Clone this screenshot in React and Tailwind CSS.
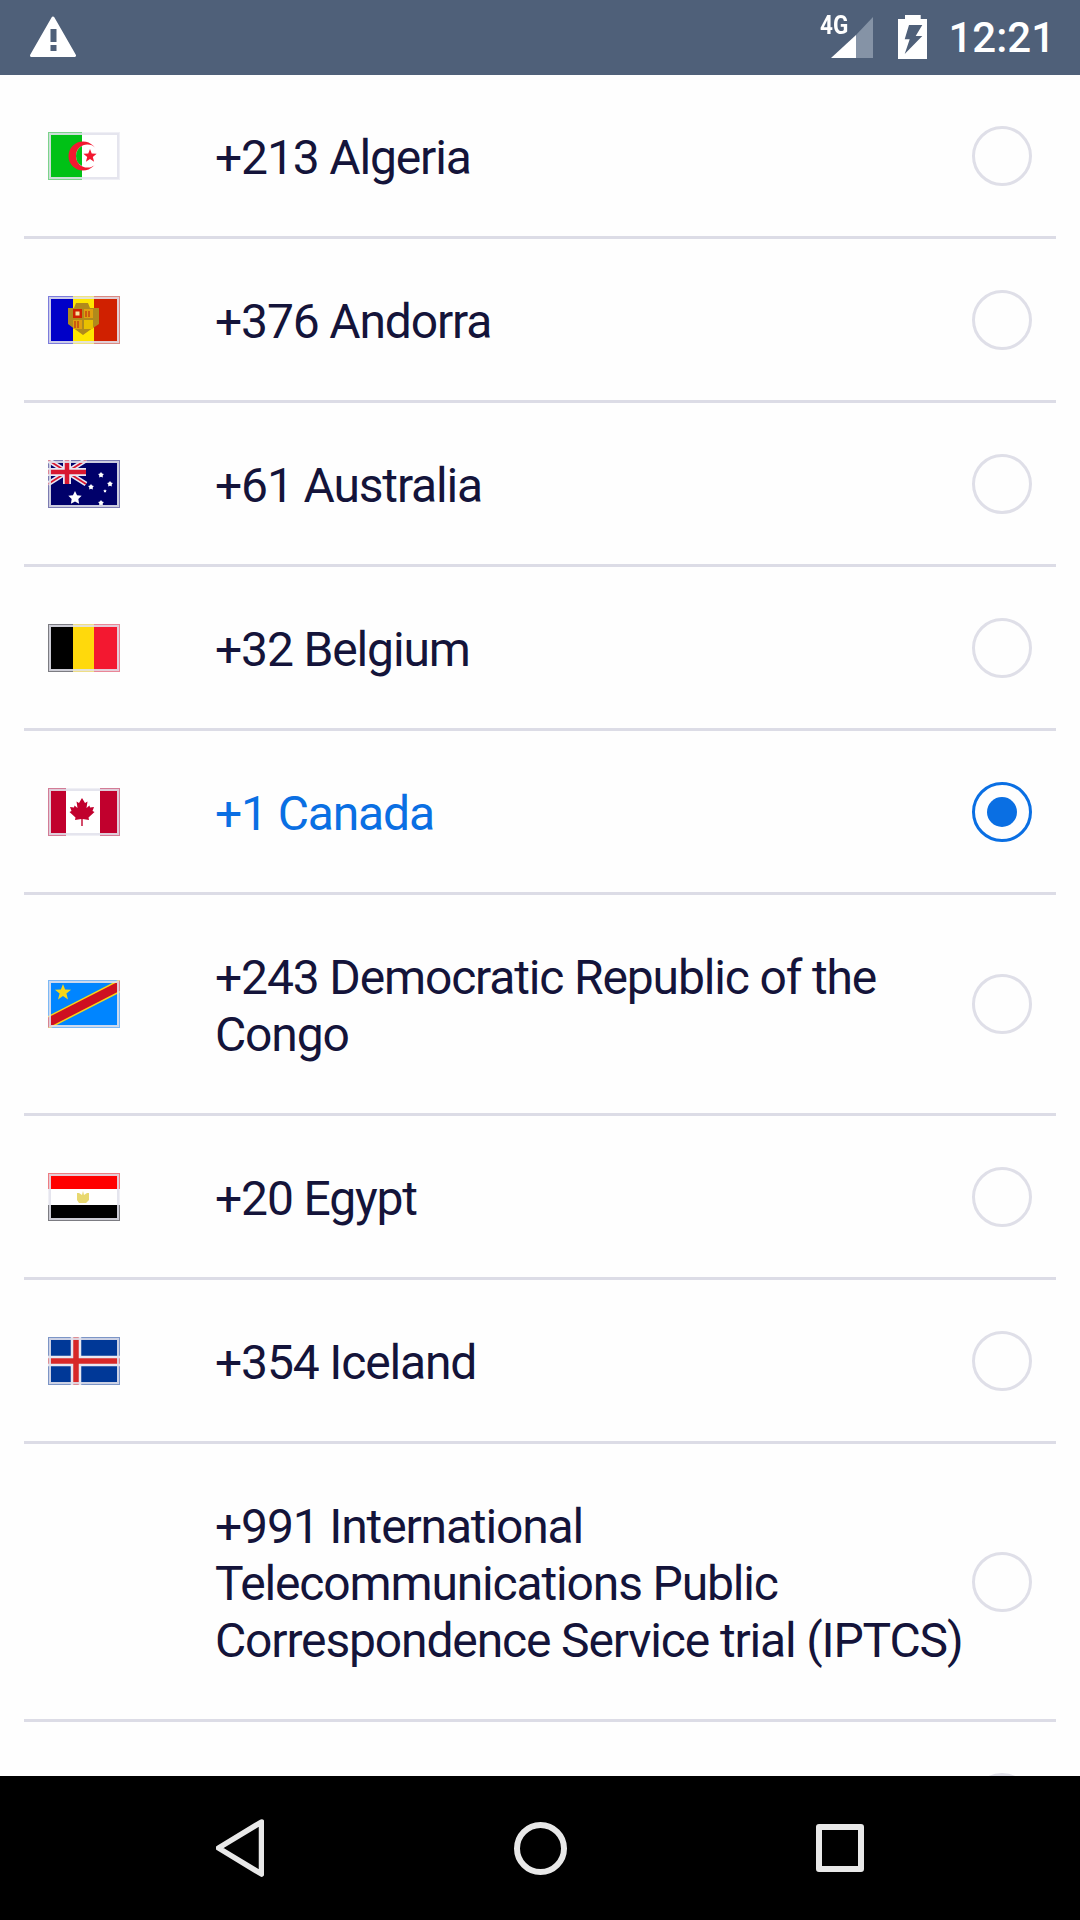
function Frame() {
  return (
    <g fill="none">
      <rect x="0.5" y="0.5" width="71" height="47" stroke="#e2e2ec" strokeOpacity="0.55" />
      <rect x="2" y="2" width="68" height="44" stroke="#e2e2ec" strokeOpacity="0.9" strokeWidth="2" />
    </g>
  );
}

function FlagSvg({ children }) {
  return (
    <svg viewBox="0 0 72 48" className="w-[72px] h-[48px] block blur-[0.4px]">
      {children}
      <Frame />
    </svg>
  );
}

const Star = ({ cx, cy, r, fill, inner = 0.42 }) => {
  const pts = [];
  for (let i = 0; i < 10; i++) {
    const a = -Math.PI / 2 + (i * Math.PI) / 5;
    const rr = i % 2 === 0 ? r : r * inner;
    pts.push(`${(cx + rr * Math.cos(a)).toFixed(2)},${(cy + rr * Math.sin(a)).toFixed(2)}`);
  }
  return <polygon points={pts.join(" ")} fill={fill} />;
};

const flags = {
  algeria: (
    <FlagSvg>
      <rect width="72" height="48" fill="#fff" />
      <rect width="34" height="48" fill="#00c116" />
      <circle cx="35" cy="24" r="14.500" fill="#f31830" />
      <circle cx="39.500" cy="24" r="11.500" fill="#fff" />
      <path d="M34 13.900A11.500 11.500 0 0 0 34 34.100Z" fill="#00c116" />
      <Star cx={42} cy={24} r={7} fill="#f31830" />
    </FlagSvg>
  ),
  andorra: (
    <FlagSvg>
      <rect width="25" height="48" fill="#0000c8" />
      <rect x="25" width="21" height="48" fill="#ffe600" />
      <rect x="46" width="26" height="48" fill="#d02000" />
      <path d="M20 12h6l2-5h12l2 5h9v16l-9 6-7 5-7-5-8-6z" fill="#b08a1c" />
      <rect x="25" y="13" width="9" height="9" fill="#d02000" />
      <rect x="27.5" y="15.500" width="4" height="4" fill="#f5e6a0" />
      <rect x="36" y="13" width="9" height="9" fill="#e0a010" />
      <rect x="25" y="24" width="9" height="9" fill="#e0a010" />
      <rect x="36" y="24" width="9" height="9" fill="#e8c000" />
      <path d="M38 15v6M41 15v6M27 25v7M30 25v7" stroke="#c03010" strokeWidth="1.200" />
    </FlagSvg>
  ),
  australia: (
    <FlagSvg>
      <rect width="72" height="48" fill="#00006a" />
      <path d="M0 0l38 24M38 0L0 24" stroke="#e8e8f4" strokeWidth="5" />
      <path d="M0 0l38 24M38 0L0 24" stroke="#d81830" strokeWidth="1.800" />
      <path d="M19 0v24M0 12h38" stroke="#e8e8f4" strokeWidth="8" />
      <path d="M19 0v24M0 12h38" stroke="#d81830" strokeWidth="4.500" />
      <Star cx={27} cy={38} r={7} fill="#fff" inner={0.5} />
      <Star cx={53} cy={15} r={3} fill="#fff" inner={0.6} />
      <Star cx={62} cy={24} r={3} fill="#fff" inner={0.6} />
      <Star cx={43} cy={27} r={3} fill="#fff" inner={0.6} />
      <Star cx={57} cy={31} r={1.800} fill="#fff" inner={0.6} />
      <Star cx={53} cy={43} r={3} fill="#fff" inner={0.6} />
    </FlagSvg>
  ),
  belgium: (
    <FlagSvg>
      <rect width="25" height="48" fill="#000" />
      <rect x="25" width="21" height="48" fill="#ffd90c" />
      <rect x="46" width="26" height="48" fill="#f31830" />
    </FlagSvg>
  ),
  canada: (
    <FlagSvg>
      <rect width="72" height="48" fill="#fff" />
      <rect width="18" height="48" fill="#c1002d" />
      <rect x="52" width="20" height="48" fill="#c1002d" />
      <polygon
        fill="#c1002d"
        points="34,10 31,15 28.500,13.500 29.500,20 26.500,17.500 26,19.500 22,19 23.500,23 21.500,24 27.500,29.500 27,32 33.300,31 33.300,38 34.700,38 34.700,31 41,32 40.500,29.500 46.500,24 44.500,23 46,19 42,19.500 41.500,17.500 38.500,20 39.500,13.500 37,15"
      />
    </FlagSvg>
  ),
  congo: (
    <FlagSvg>
      <rect width="72" height="48" fill="#0085ff" />
      <path d="M-2 43.700L74 4.700" stroke="#f7d618" strokeWidth="12" />
      <path d="M-2 43.700L74 4.700" stroke="#ce1021" strokeWidth="9" />
      <Star cx={15} cy={12.500} r={8.500} fill="#f7d618" />
    </FlagSvg>
  ),
  egypt: (
    <FlagSvg>
      <rect width="72" height="16" fill="#ff0000" />
      <rect y="16" width="72" height="16" fill="#fff" />
      <rect y="32" width="72" height="16" fill="#000" />
      <path d="M29 20h2l3 2 1-4 1 4 3-2h2v7l-3 3h-7l-2-3z" fill="#e8d870" />
    </FlagSvg>
  ),
  iceland: (
    <FlagSvg>
      <rect width="72" height="48" fill="#003897" />
      <path d="M28 0v48M0 24h72" stroke="#e8e8f0" strokeWidth="10.500" />
      <path d="M28 0v48M0 24h72" stroke="#d72828" strokeWidth="5.500" />
    </FlagSvg>
  ),
};

const rows = [
  { flag: "algeria", lines: "+213 Algeria" },
  { flag: "andorra", lines: "+376 Andorra" },
  { flag: "australia", lines: "+61 Australia" },
  { flag: "belgium", lines: "+32 Belgium" },
  { flag: "canada", lines: "+1 Canada", selected: true },
  { flag: "congo", lines: "+243 Democratic Republic of the Congo" },
  { flag: "egypt", lines: "+20 Egypt" },
  { flag: "iceland", lines: "+354 Iceland" },
  { flag: null, lines: "+991 International Telecommunications Public Correspondence Service trial (IPTCS)" },
];

function Radio({ selected }) {
  if (selected) {
    return (
      <div className="w-[60px] h-[60px] rounded-full border-[3px] border-[#0a6fe3] flex items-center justify-center shrink-0">
        <div className="w-[30px] h-[30px] rounded-full bg-[#0a6fe3]" />
      </div>
    );
  }
  return <div className="w-[60px] h-[60px] rounded-full border-[3px] border-[#dfdfe8] shrink-0" />;
}

function Row({ flag, lines, selected }) {
  return (
    <div className="flex items-center mx-6 px-6 py-[52px] border-b-[3px] border-[#dcdce6]">
      <div className="w-[72px] shrink-0">{flag ? flags[flag] : null}</div>
      <div
        className={
          "ml-[95px] w-[753px] pt-[2px] mb-[-2px] text-[48px] leading-[57px] tracking-[-1.15px] " +
          (selected ? "text-[#0a6fe3]" : "text-[#14143a]")
        }
      >
        {lines}
      </div>
      <div className="ml-auto h-[57px] flex items-center">
        <Radio selected={selected} />
      </div>
    </div>
  );
}

export default function App() {
  return (
    <div className="w-[1080px] h-[1920px] flex flex-col bg-[#fefefe] overflow-hidden font-['Roboto',sans-serif]">
      <div className="h-[75px] shrink-0 bg-[#4f6079] flex items-center justify-between pl-[30px] pr-[25px]">
        <svg viewBox="0 0 46 41" className="w-[46px] h-[41px] block mt-[-2px]">
          <path
            d="M23 2L44.500 39.500H1.500Z"
            fill="#fff"
            stroke="#fff"
            strokeWidth="3"
            strokeLinejoin="round"
          />
          <rect x="20.500" y="13" width="6" height="13" fill="#4f6079" />
          <rect x="20.500" y="29" width="6" height="6" fill="#4f6079" />
        </svg>
        <div className="flex items-center">
          <div className="relative w-[42px] h-[41px] mt-[-1px]">
            <span className="absolute left-[-11px] top-0 text-[25px] leading-[18px] font-bold text-white origin-left scale-x-90">
              4G
            </span>
            <svg viewBox="0 0 42 41" className="w-[42px] h-[41px] block">
              <polygon points="42,0 42,41 25,41 25,18" fill="#8593a6" />
              <polygon points="25,18 25,41 0,41" fill="#fff" />
            </svg>
          </div>
          <svg viewBox="0 0 29 44" className="w-[29px] h-[44px] block ml-[25px] mt-[-1px]">
            <path
              fillRule="evenodd"
              d="M7 0h15.700v4H29v40H0V4h7zM11 10L6.700 24.300h5L6.700 39 24.300 21h-6.600L24.300 10z"
              fill="#fff"
            />
          </svg>
          <span className="ml-[21px] text-[42px] leading-[75px] font-medium text-white">12:21</span>
        </div>
      </div>

      <div className="flex-1 overflow-hidden">
        {rows.map((r) => (
          <Row key={r.lines} {...r} />
        ))}
        <div className="flex justify-end pr-[48px] pt-[51px]">
          <Radio />
        </div>
      </div>

      <div className="h-[144px] shrink-0 bg-black flex items-center justify-center gap-[204px]">
        <div className="w-[96px] flex justify-center">
          <svg viewBox="0 0 48 58" className="w-[48px] h-[58px] block">
            <polygon
              points="45.500,3 2.500,29 45.500,55"
              fill="none"
              stroke="#e8e8e8"
              strokeWidth="5.500"
              strokeLinejoin="round"
            />
          </svg>
        </div>
        <div className="w-[96px] flex justify-center">
          <div className="w-[53px] h-[53px] rounded-full border-[6px] border-[#e8e8e8]" />
        </div>
        <div className="w-[96px] flex justify-center">
          <div className="w-[48px] h-[48px] rounded-[3px] border-[6px] border-[#e8e8e8]" />
        </div>
      </div>
    </div>
  );
}
